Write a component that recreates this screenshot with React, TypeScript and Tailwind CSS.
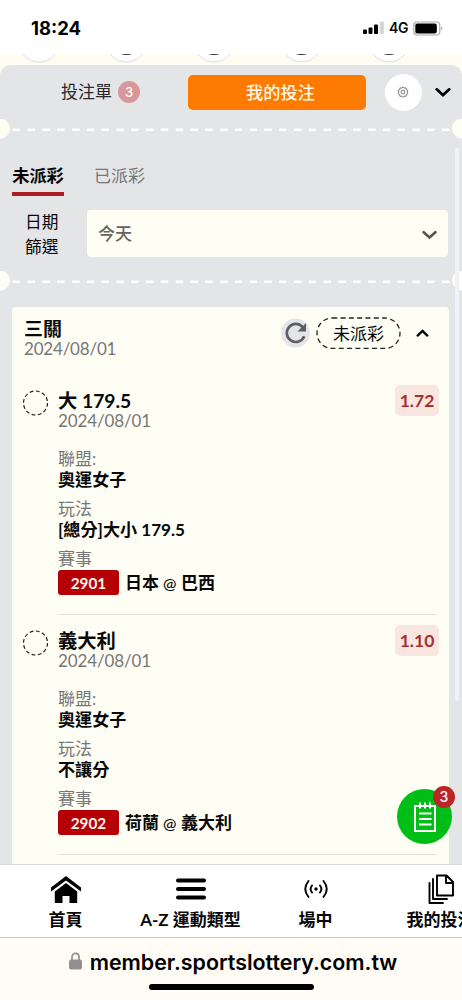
import React from "react";

type Bet = {
  title: string;
  odds: string;
  date: string;
  league: string;
  play: string;
  code: string;
  home: string;
  away: string;
};

const bets: Bet[] = [
  { title: "大 179.5", odds: "1.72", date: "2024/08/01", league: "奧運女子", play: "[總分]大小 179.5", code: "2901", home: "日本", away: "巴西" },
  { title: "義大利", odds: "1.10", date: "2024/08/01", league: "奧運女子", play: "不讓分", code: "2902", home: "荷蘭", away: "義大利" },
];

function StatusBar() {
  return (
    <header className="flex h-[54px] shrink-0 items-start justify-between bg-white pl-[31px] pr-[19px] pt-[17px] font-['Inter']">
      <span className="text-[18.5px] font-bold leading-[22px] text-black">18:24</span>
      <div className="flex h-[22px] items-center">
        <svg width="21" height="14" viewBox="0 0 21 14" className="mr-[5px]">
          <rect x="0" y="8.5" width="4" height="4.5" rx="1" />
          <rect x="5.5" y="6.5" width="4" height="6.5" rx="1" />
          <rect x="11" y="3.5" width="4" height="9.5" rx="1" />
          <rect x="16.8" y="0.5" width="4" height="12.5" rx="1" fill="#d4d4d4" />
        </svg>
        <span className="w-[19px] text-[14px] font-semibold leading-[22px] tracking-[-0.3px]">4G</span>
        <svg width="30" height="15" viewBox="0 0 30 15" className="ml-[5px]">
          <rect x="0.8" y="1" width="26" height="13" rx="3.5" fill="white" stroke="#aaa" strokeWidth="1.2" />
          <rect x="2.3" y="2.5" width="21.5" height="10" rx="2" />
          <path d="M28.3 5.5v4c1.3-.6 1.3-3.4 0-4" fill="#999" />
        </svg>
      </div>
    </header>
  );
}

function HiddenSports() {
  return (
    <div className="flex h-[11px] shrink-0 bg-[#fffdf3]">
      <svg width="462" height="11" viewBox="0 0 462 11">
        {[39, 126.5, 214, 301.5, 389].map((x, i) => (
          <g key={x}>
            <circle cx={x} cy="-12" r="20" fill="white" stroke="#dcdcd8" strokeWidth="1" />
            {i > 0 && <ellipse cx={x} cy="-2" rx="8" ry="3" fill="#333" />}
          </g>
        ))}
      </svg>
    </div>
  );
}

function Perforation() {
  return (
    <div className="flex h-5 shrink-0 items-center">
      <svg width="462" height="20" viewBox="0 0 462 20">
        <circle cx="0" cy="9.5" r="10" fill="#fffef5" />
        <circle cx="462" cy="9.5" r="10" fill="#fffef5" />
        <path d="M12.8 10.7H450" stroke="#fffffc" strokeWidth="2.6" strokeDasharray="7.4 7.4" />
      </svg>
    </div>
  );
}

function Chevron({ up = false, w = 14, color = "#000", sw = 2.4 }: { up?: boolean; w?: number; color?: string; sw?: number }) {
  return (
    <svg width={w} height={w * 0.65} viewBox="0 0 14 9" fill="none" stroke={color} strokeWidth={sw} strokeLinecap="round" className="block">
      <path d={up ? "M1.8 7 7 2l5.2 5" : "M1.5 2 7 7 12.5 2"} />
    </svg>
  );
}

function BetItem({ bet }: { bet: Bet }) {
  return (
    <article className="flex h-60 shrink-0 pl-[11px]">
      <svg width="26" height="26" viewBox="0 0 26 26" className="mr-[9px] mt-[1px] shrink-0">
        <circle cx="12.5" cy="13" r="12" fill="none" stroke="#222" strokeWidth="1.2" strokeDasharray="3.77 2.51" />
      </svg>
      <div className="h-[226px] w-[378px] border-b border-[#e0e0da]">
        <div className="flex h-[43px] justify-between">
          <div>
            <h3 className="h-[22px] text-[19.3px] font-bold leading-[23px]">{bet.title}</h3>
            <p className="h-5 text-[17px] leading-5 tracking-[-0.12px] text-[#777]">{bet.date}</p>
          </div>
          <span className="-mr-[3px] mt-[-4px] h-[31px] w-11 rounded-[5px] bg-[#f9e6e0] text-center text-[17.5px] font-bold leading-[32px] text-[#a92f2d]">{bet.odds}</span>
        </div>
        <p className="mt-[17px] h-5 text-[17px] leading-5 text-[#777]">聯盟:</p>
        <p className="h-[30px] text-[17.1px] font-bold leading-[22px]">{bet.league}</p>
        <p className="h-5 text-[17px] leading-5 text-[#777]">玩法</p>
        <p className="h-[30px] text-[17.1px] font-bold leading-[22px]">{bet.play}</p>
        <p className="h-5 text-[17px] leading-5 text-[#777]">賽事</p>
        <div className="mt-px flex h-[25px] items-center gap-[6px]">
          <span className="h-[25px] w-[61px] rounded-[3px] bg-[#b50005] text-center text-[15.3px] font-bold leading-[26px] text-[#fff8ef]">{bet.code}</span>
          <span className="flex gap-[4px] text-[17px] font-bold leading-[25px]">
            <span>{bet.home}</span>
            <span className="w-[14px] text-[16px] font-medium">@</span>
            <span>{bet.away}</span>
          </span>
        </div>
      </div>
    </article>
  );
}

function NavItem({ label, children }: { label: string; children: React.ReactNode }) {
  return (
    <div className="flex w-[125px] shrink-0 flex-col items-center">
      <div className="flex h-[30px] items-center">{children}</div>
      <span className="mt-1 whitespace-nowrap text-[17px] font-bold leading-6">{label}</span>
    </div>
  );
}

export default function App() {
  return (
    <div lang="zh-TW" className="flex h-[1000px] w-[462px] flex-col overflow-hidden bg-[#fffdf3] font-['Lato','Noto_Sans_CJK_TC',sans-serif] text-[#080808]">
      <StatusBar />
      <HiddenSports />
      <main className="relative flex h-[799px] shrink-0 flex-col overflow-hidden rounded-t-[10px] bg-[#e4e5e7]">
        <div className="absolute left-[455px] top-[83px] h-[553px] w-1 rounded-full bg-[#f1f2f7]" />
        <div className="flex h-[54px] shrink-0 items-center pl-[61px]">
          <span className="w-[57px] text-[17px] leading-6 text-[#292929]">投注單</span>
          <span className="h-[22px] w-[22px] rounded-full bg-[#d9979b] text-center font-['Inter'] text-[13px] font-medium leading-[22px] text-[#fffdf3]">3</span>
          <button className="ml-12 h-[35px] w-[178px] rounded-[5px] bg-[#ff7a00] pl-[7px] text-[17.2px] font-medium leading-[35px] text-[#fffbe9]">我的投注</button>
          <span className="ml-[19px] flex size-[37px] items-center justify-center rounded-full bg-white pr-px">
            <svg width="12" height="12" viewBox="0 0 24 24" fill="none" stroke="#555" strokeWidth="1.6">
              <circle cx="12" cy="12" r="3.8" />
              <path d="m12 1.800 2.500 2.600 3.600-.7.600 3.600 3.200 1.700-1.600 3.200 1.600 3.300-3.200 1.600-.6 3.600-3.600-.6L12 22.700l-2.500-2.600-3.600.6-.6-3.600-3.200-1.600 1.600-3.300L2.100 9l3.200-1.700.6-3.600 3.600.7z" />
            </svg>
          </span>
          <span className="ml-[13px]"><Chevron w={16} sw={2.4} /></span>
        </div>
        <Perforation />
        <div className="flex h-[57px] shrink-0 items-end gap-[30px] px-3">
          <span className="h-[34px] w-[52px] border-b-[4px] border-[#ae1c23] text-center text-[17.2px] font-bold leading-[28px]">未派彩</span>
          <span className="h-[34px] text-[17px] leading-[28px] text-[#777]">已派彩</span>
        </div>
        <div className="flex h-[75px] shrink-0 pt-[14px]">
          <p className="ml-[25px] w-[62px] text-[16.7px] leading-[24.5px]">日期<br />篩選</p>
          <div className="flex h-[47px] w-[361px] items-center justify-between rounded-[4px] bg-[#fffef5] pl-[11px] pr-[11px] text-[17px] font-medium leading-6 text-[#66645e]">
            <span>今天</span>
            <span className="mt-[3px]"><Chevron w={15} color="#55544f" /></span>
          </div>
        </div>
        <Perforation />
        <section className="ml-3 mt-4 flex h-[557px] w-[437px] shrink-0 flex-col overflow-hidden rounded-t-[4px] bg-[#fffef5]">
          <div className="flex h-[82px] shrink-0 items-start pl-3 pt-[10px]">
            <div className="w-[257px]">
              <h2 className="h-[21px] text-[19px] font-bold leading-[23px]">三關</h2>
              <p className="text-[17px] leading-[21px] tracking-[-0.2px] text-[#777]">2024/08/01</p>
            </div>
            <svg width="29" height="30" viewBox="0 0 29 30" className="mt-[1px]">
              <circle cx="14.500" cy="15" r="14.500" fill="#e4e5e8" />
              <path d="M21.800 9.300A9 9 0 1 0 23.200 18.200" fill="none" stroke="#5d5f63" strokeWidth="2.700" />
              <path d="M25 5v8.500h-8.500z" fill="#5d5f63" />
            </svg>
            <div className="ml-[6px] grid h-8 w-[85px] place-items-center">
              <svg width="85" height="32" viewBox="0 0 85 32" className="col-start-1 row-start-1">
                <rect x="1" y="1" width="83" height="30.500" rx="15.250" fill="none" stroke="#222" strokeWidth="1.300" strokeDasharray="5 3.300" />
              </svg>
              <span className="col-start-1 row-start-1 pt-[2px] text-[17px] leading-6">未派彩</span>
            </div>
            <span className="ml-[15px] mt-[12px]"><Chevron up w={13} sw={2.5} /></span>
          </div>
          {bets.map((bet) => <BetItem key={bet.code} bet={bet} />)}
        </section>
        <button className="absolute left-[397px] top-[724px] flex size-[55px] items-center justify-center rounded-full bg-[#00be16]">
          <svg width="24" height="32" viewBox="0 0 24 32" fill="none" stroke="white" strokeWidth="2">
            <path d="M2 5h20v25H2zM7 1.500v6M12 1.500v6M17 1.500v6M6 12.500h12.500M6 18h12.500M6 23.500h12.500" />
          </svg>
        </button>
        <span className="absolute left-[433px] top-[721px] size-[22px] rounded-full bg-[#bb2729] text-center font-['Inter'] text-[14px] font-medium leading-[22px] text-white">3</span>
      </main>
      <nav className="flex h-[74px] w-[462px] shrink-0 overflow-hidden border-b border-t border-b-[#cac9c5] border-t-[#dcdcdc] bg-white pl-[3px] pt-[9px]">
        <NavItem label="首頁">
          <svg width="30" height="27" viewBox="0 0 30 27">
            <path d="M15 0 30 11.500v4L15 4.500 0 15.500v-4z" />
            <path d="m15 7 11.200 8.500V27h-7.700v-7h-7v7H3.800V15.500z" />
          </svg>
        </NavItem>
        <NavItem label="A-Z 運動類型">
          <svg width="30" height="24" viewBox="0 0 30 24" stroke="#000" strokeWidth="4" strokeLinecap="round"><path d="M2 3.500h26M2 12h26M2 20.500h26" /></svg>
        </NavItem>
        <NavItem label="場中">
          <svg width="24" height="20" viewBox="0 0 24 20" fill="none" stroke="#000" strokeWidth="1.900" strokeLinecap="round">
            <circle cx="12" cy="10" r="1.700" fill="#000" stroke="none" />
            <path d="M8 6.500q-2.800 3.500 0 7M16 6.500q2.800 3.500 0 7M4.500 2Q-2 10 4.500 18M19.500 2q6.500 8 0 16" />
          </svg>
        </NavItem>
        <NavItem label="我的投注">
          <svg width="26" height="30" viewBox="0 0 26 30" fill="none" stroke="#000" strokeWidth="1.900" strokeLinejoin="round" strokeLinecap="round">
            <path d="M9 1.500h9.500L25 8v13.500H9zM18 2v7h7M5 5v20h14M1.500 9v20h13.500" />
          </svg>
        </NavItem>
      </nav>
      <footer className="flex h-[62px] shrink-0 flex-col items-center bg-[#fffcf5] pt-[9px]">
        <div className="flex h-7 items-center gap-[8px] pl-1">
          <svg width="13" height="18" viewBox="0 0 13 18">
            <rect y="7.500" width="13" height="10" rx="2" fill="#918f90" />
            <path d="M3 8V5.200C3 0 10 0 10 5.200V8" fill="none" stroke="#918f90" strokeWidth="1.700" />
          </svg>
          <span className="pt-px font-['Inter'] text-[21.4px] font-semibold leading-7 text-black">member.sportslottery.com.tw</span>
        </div>
        <div className="mt-[9px] h-[6px] w-[165px] rounded-full bg-black" />
      </footer>
    </div>
  );
}
